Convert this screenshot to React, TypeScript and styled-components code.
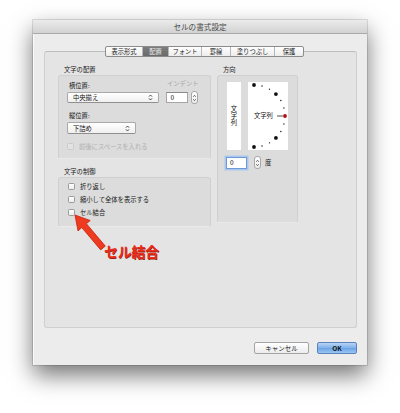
import React from 'react';
import styled, { createGlobalStyle } from 'styled-components';

const GlobalStyle = createGlobalStyle`
  body {
    margin: 0;
    background: #ffffff;
    font-family: "Noto Sans CJK JP", "Noto Sans", sans-serif;
  }
`;

const tabs = ['表示形式', '配置', 'フォント', '罫線', '塗りつぶし', '保護'];
const tabWidths = [36, 25, 32, 28, 43, 28];

const controlOptions = ['折り返し', '縮小して全体を表示する', 'セル結合'];

const App = () => {
  return (
    <Stage>
      <GlobalStyle />
      <Window>
        <TitleBar>セルの書式設定</TitleBar>
        <Body>
          <TabBar>
            {tabs.map((tab, i) => (
              <Tab key={tab} $width={tabWidths[i]} $active={i === 1}>
                {tab}
              </Tab>
            ))}
          </TabBar>
          <Panel>
            <LeftColumn>
              <GroupLabel>文字の配置</GroupLabel>
              <GroupBox $pad="6px 8px 5px 8px">
                <HRow>
                  <Field>
                    <FieldLabel>横位置:</FieldLabel>
                    <Popup $width={92}>
                      中央揃え
                      <PopupArrows />
                    </Popup>
                  </Field>
                  <IndentField>
                    <FieldLabel $muted>インデント</FieldLabel>
                    <IndentRow>
                      <NumberInput>0</NumberInput>
                      <Stepper />
                    </IndentRow>
                  </IndentField>
                </HRow>
                <Field $top={8}>
                  <FieldLabel>縦位置:</FieldLabel>
                  <Popup $width={69} $height={12}>
                    下詰め
                    <PopupArrows />
                  </Popup>
                </Field>
                <CheckRow $disabled $top={6}>
                  <CheckBox $disabled />
                  前後にスペースを入れる
                </CheckRow>
              </GroupBox>

              <GroupLabel $top={9}>文字の制御</GroupLabel>
              <GroupBox $pad="2px 9px 7px 9px">
                {controlOptions.map((opt) => (
                  <CheckRow key={opt}>
                    <CheckBox />
                    {opt}
                  </CheckRow>
                ))}
              </GroupBox>
            </LeftColumn>

            <RightColumn>
              <GroupLabel>方向</GroupLabel>
              <GroupBox $pad="6px 9px 0 9px" $height={148}>
                <OrientRow>
                  <VerticalStrip>
                    <VerticalText>文字列</VerticalText>
                  </VerticalStrip>
                  <Dial>
                    <DialText>文字列</DialText>
                    <DialDots />
                  </Dial>
                </OrientRow>
                <DegreeRow>
                  <DegreeInput>0</DegreeInput>
                  <Stepper />
                  <DegreeUnit>度</DegreeUnit>
                </DegreeRow>
              </GroupBox>
            </RightColumn>
          </Panel>
          <ButtonRow>
            <Button $width={55}>キャンセル</Button>
            <Button $width={40} $primary>
              OK
            </Button>
          </ButtonRow>
        </Body>
      </Window>
      <Annotation>
        <svg width="60" height="50" viewBox="0 0 60 50">
          <polygon
            points="15,10 30.2,15.5 26.4,18.7 45.3,41.1 40.7,44.9 21.8,22.6 18,25.9"
            fill="#ee3a1e"
            stroke="#c4210c"
            strokeWidth="0.8"
            strokeLinejoin="round"
          />
        </svg>
        <AnnotationText>セル結合</AnnotationText>
      </Annotation>
    </Stage>
  );
};

const PopupArrows = () => (
  <ArrowIcon width="5" height="7" viewBox="0 0 5 7">
    <path d="M1 2.6 L2.5 1 L4 2.6 M1 4.4 L2.5 6 L4 4.4" fill="none" stroke="#333" strokeWidth="0.9" />
  </ArrowIcon>
);

const Stepper = () => (
  <StepperBox>
    <svg width="6" height="12" viewBox="0 0 6 12">
      <path d="M1.5 4.5 L3 2.8 L4.5 4.5 M1.5 7.5 L3 9.2 L4.5 7.5" fill="none" stroke="#333" strokeWidth="0.9" />
    </svg>
  </StepperBox>
);

const DialDots = () => {
  const cx = 6;
  const cy = 34;
  const r = 31;
  const dots = [];
  for (let a = -90; a <= 90; a += 15) {
    const rad = (a * Math.PI) / 180;
    const x = cx + r * Math.cos(rad);
    const y = cy - r * Math.sin(rad);
    const big = a % 45 === 0;
    dots.push(
      <circle
        key={a}
        cx={x}
        cy={y}
        r={big ? 1.9 : 0.7}
        fill={a === 0 ? '#b01010' : '#111'}
      />
    );
  }
  return (
    <DialSvg width="40" height="68" viewBox="0 0 40 68">
      <line x1="29" y1="34" x2="35" y2="34" stroke="#222" strokeWidth="0.8" />
      {dots}
    </DialSvg>
  );
};

const Stage = styled.div`
  position: relative;
  padding: 20px 0 40px 33px;
`;

const Window = styled.div`
  width: 334px;
  height: 345px;
  display: flex;
  flex-direction: column;
  background: #ececec;
  box-shadow: 0 10px 22px rgba(0, 0, 0, 0.55), 0 0 0 1px rgba(0, 0, 0, 0.12);
`;

const TitleBar = styled.div`
  height: 14px;
  display: flex;
  align-items: center;
  justify-content: center;
  font-size: 7.6px;
  color: #4a4a4a;
  background: linear-gradient(#ebebeb, #d2d2d2);
  border-bottom: 1px solid #a9a9a9;
  box-sizing: border-box;
`;

const Body = styled.div`
  flex: 1;
  display: flex;
  flex-direction: column;
  padding: 12px 10px 0 10px;
  border-left: 1px solid #fafafa;
`;

const TabBar = styled.div`
  position: relative;
  z-index: 1;
  display: flex;
  align-self: center;
  margin-left: 8px;
  height: 11px;
  border: 1px solid #8c8c8c;
  border-radius: 2px;
  background: linear-gradient(#ffffff, #ececec);
  box-sizing: border-box;
  margin-bottom: -6px;
`;

const Tab = styled.div<{ $width: number; $active?: boolean }>`
  width: ${(p) => p.$width}px;
  display: flex;
  align-items: center;
  justify-content: center;
  font-size: 6.3px;
  color: ${(p) => (p.$active ? '#eeeeee' : '#1e1e1e')};
  background: ${(p) => (p.$active ? 'linear-gradient(#7e7e7e, #6a6a6a)' : 'transparent')};
  border-left: 1px solid #b8b8b8;
  &:first-child {
    border-left: none;
  }
`;

const Panel = styled.div`
  height: 277px;
  box-sizing: border-box;
  display: grid;
  grid-template-columns: 153px 81px;
  column-gap: 6px;
  align-items: start;
  padding: 14px 0 0 13px;
  background: #e4e4e4;
  border: 1px solid #cfcfcf;
  border-top-color: #bdbdbd;
  border-radius: 3px;
`;

const LeftColumn = styled.div`
  display: flex;
  flex-direction: column;
`;

const RightColumn = styled.div`
  display: flex;
  flex-direction: column;
`;

const GroupLabel = styled.div<{ $top?: number }>`
  font-size: 6.3px;
  line-height: 8px;
  height: 9px;
  padding-left: 6px;
  margin-top: ${(p) => p.$top ?? 0}px;
  color: #1a1a1a;
`;

const GroupBox = styled.div<{ $pad: string; $height?: number }>`
  padding: ${(p) => p.$pad};
  ${(p) => (p.$height ? `height: ${p.$height}px;` : '')}
  box-sizing: border-box;
  background: #dcdcdc;
  border: 1px solid #d0d0d0;
  border-bottom-color: #e9e9e9;
  border-radius: 3px;
  display: flex;
  flex-direction: column;
`;

const HRow = styled.div`
  display: flex;
  gap: 6px;
`;

const Field = styled.div<{ $top?: number }>`
  display: flex;
  flex-direction: column;
  gap: 2px;
  margin-top: ${(p) => p.$top ?? 0}px;
`;

const FieldLabel = styled.div<{ $muted?: boolean }>`
  font-size: 6.3px;
  line-height: 8px;
  padding-left: 2px;
  color: ${(p) => (p.$muted ? '#a6a6a6' : '#1a1a1a')};
`;

const IndentField = styled.div`
  display: flex;
  flex-direction: column;
  align-items: flex-end;
  margin-top: -2px;
  gap: 3px;
`;

const IndentRow = styled.div`
  display: flex;
  align-items: center;
  gap: 3px;
`;

const Popup = styled.div<{ $width: number; $height?: number }>`
  width: ${(p) => p.$width}px;
  height: ${(p) => p.$height ?? 11}px;
  box-sizing: border-box;
  display: flex;
  align-items: center;
  justify-content: space-between;
  padding: 0 5px 0 5px;
  font-size: 6.3px;
  color: #111;
  background: linear-gradient(#ffffff, #f0f0f0);
  border: 1px solid #a8a8a8;
  border-bottom-color: #8f8f8f;
  border-radius: 2px;
`;

const ArrowIcon = styled.svg`
  display: block;
`;

const NumberInput = styled.div`
  width: 22px;
  height: 11px;
  box-sizing: border-box;
  padding-left: 3px;
  font-size: 6.5px;
  line-height: 9px;
  background: #ffffff;
  border: 1px solid #a5a5a5;
  border-top-color: #8a8a8a;
`;

const StepperBox = styled.div`
  width: 7px;
  height: 13px;
  box-sizing: border-box;
  display: flex;
  align-items: center;
  justify-content: center;
  background: linear-gradient(#ffffff, #eeeeee);
  border: 1px solid #a8a8a8;
  border-radius: 3px;
`;

const CheckRow = styled.div<{ $disabled?: boolean; $top?: number }>`
  display: flex;
  align-items: center;
  gap: 5px;
  height: 13px;
  margin-top: ${(p) => p.$top ?? 0}px;
  font-size: 6.3px;
  color: ${(p) => (p.$disabled ? '#b0b0b0' : '#1a1a1a')};
`;

const CheckBox = styled.div<{ $disabled?: boolean }>`
  width: 7px;
  height: 7px;
  box-sizing: border-box;
  border: 1px solid ${(p) => (p.$disabled ? '#cbcbcb' : '#9a9a9a')};
  border-radius: 1.5px;
  background: ${(p) => (p.$disabled ? '#e2e2e2' : 'linear-gradient(#ffffff, #ededed)')};
`;

const OrientRow = styled.div`
  display: flex;
  gap: 7px;
  height: 68px;
`;

const VerticalStrip = styled.div`
  width: 14px;
  background: #ffffff;
  display: flex;
  align-items: center;
  justify-content: center;
`;

const VerticalText = styled.div`
  writing-mode: vertical-rl;
  font-size: 6.3px;
  letter-spacing: 1px;
  color: #111;
`;

const Dial = styled.div`
  position: relative;
  width: 40px;
  background: #ffffff;
`;

const DialText = styled.div`
  position: absolute;
  left: 6px;
  top: 30px;
  font-size: 6.3px;
  line-height: 8px;
  color: #111;
`;

const DialSvg = styled.svg`
  position: absolute;
  inset: 0;
`;

const DegreeRow = styled.div`
  display: flex;
  align-items: center;
  gap: 6px;
  margin-top: 6px;
  margin-left: -1px;
`;

const DegreeInput = styled.div`
  width: 21px;
  height: 12px;
  box-sizing: border-box;
  padding-left: 3px;
  font-size: 6.5px;
  line-height: 9px;
  background: #ffffff;
  border: 1px solid #6f9ad6;
  box-shadow: 0 0 0 1.5px #a9c7ee;
  margin-right: 1px;
`;

const DegreeUnit = styled.div`
  font-size: 6.3px;
  color: #1a1a1a;
  margin-left: -2px;
`;

const ButtonRow = styled.div`
  display: flex;
  justify-content: flex-end;
  gap: 8px;
  margin-top: 14px;
`;

const Button = styled.div<{ $width: number; $primary?: boolean }>`
  width: ${(p) => p.$width}px;
  height: 12px;
  box-sizing: border-box;
  display: flex;
  align-items: center;
  justify-content: center;
  font-size: 6.5px;
  font-weight: ${(p) => (p.$primary ? 700 : 400)};
  color: #111;
  border-radius: 2px;
  border: 1px solid ${(p) => (p.$primary ? '#5b82bb' : '#a3a3a3')};
  background: ${(p) =>
    p.$primary ? 'linear-gradient(#b9d5f5, #7fb0ea 50%, #69a2e6 51%, #9cc6f3)' : 'linear-gradient(#ffffff, #ececec)'};
`;

const Annotation = styled.div`
  position: absolute;
  left: 60px;
  top: 205px;
  width: 110px;
  height: 60px;
`;

const AnnotationText = styled.div`
  position: absolute;
  left: 44px;
  top: 36px;
  font-size: 14px;
  font-weight: 700;
  letter-spacing: -0.3px;
  color: #ea2e1c;
  text-shadow: 0.6px 0.8px 0 #9e1a0c;
  white-space: nowrap;
`;

export default App;
